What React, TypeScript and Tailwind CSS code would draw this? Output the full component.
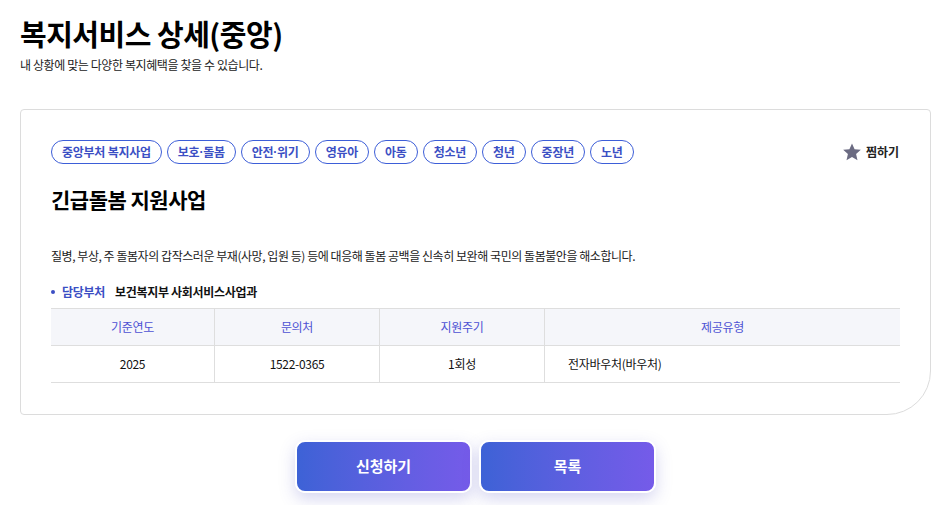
import React from "react";

const tags = ["중앙부처 복지사업", "보호|돌봄", "안전|위기", "영유아", "아동", "청소년", "청년", "중장년", "노년"];

function Tag({ t }: { t: string }) {
  const parts = t.split("|");
  return (
    <span className="h-[24px] px-[10px] flex items-center rounded-full border border-[#3d5ed8] text-[#3b4fc4] text-[12px] font-semibold tracking-[-0.25px]">
      {parts.length === 2 ? (
        <>
          {parts[0]}
          <span style={{ fontFamily: '"Liberation Sans", sans-serif' }}>·</span>
          {parts[1]}
        </>
      ) : (
        t
      )}
    </span>
  );
}

export default function App() {
  return (
    <div
      className="w-[947px] h-[505px] bg-white text-[#111] overflow-hidden"
      style={{ fontFamily: '"Noto Sans CJK KR", "Noto Sans", sans-serif' }}
    >
      <div className="px-5 pt-[14px]">
        <h1 className="text-[29px] font-bold leading-[38px] tracking-[-0.5px] text-black">복지서비스 상세(중앙)</h1>
        <p className="mt-[5px] text-[12px] leading-[16px] text-[#222] tracking-[-0.4px]">내 상황에 맞는 다양한 복지혜택을 찾을 수 있습니다.</p>
      </div>

      <div className="ml-5 mr-[16px] mt-[36px] h-[306px] border border-[#dcdcdc] rounded-[4px] rounded-br-[44px] px-[30px] pt-[30px]">
        <div className="flex items-start justify-between">
          <div className="flex gap-[5px]">
            {tags.map((t) => (
              <Tag key={t} t={t} />
            ))}
          </div>
          <div className="flex items-center gap-[4px] pt-[2px] mr-[1px]">
            <svg width="20" height="20" viewBox="0 0 24 24">
              <path
                d="M12 1.8l3.1 6.9 7.5.7-5.7 5 1.7 7.4L12 17.9l-6.6 3.9 1.7-7.4-5.7-5 7.5-.7z"
                fill="#6b6b82"
              />
            </svg>
            <span className="text-[12px] font-bold text-[#222]">찜하기</span>
          </div>
        </div>

        <h2 className="mt-[20px] text-[21px] font-bold leading-[30px] tracking-[-0.5px] text-black">긴급돌봄 지원사업</h2>

        <p className="mt-[34px] text-[12px] leading-[16px] text-[#222] tracking-[-0.45px]">
          질병, 부상, 주 돌봄자의 갑작스러운 부재(사망, 입원 등) 등에 대응해 돌봄 공백을 신속히 보완해 국민의 돌봄불안을 해소합니다.
        </p>

        <div className="mt-[19px] flex items-center text-[12px] tracking-[-0.3px]">
          <span className="w-[4px] h-[4px] rounded-full bg-[#3b4fc4] mr-[7px]" />
          <span className="text-[#3b4fc4] font-semibold w-[53px]">담당부처</span>
          <span className="font-semibold text-[#111]">보건복지부 사회서비스사업과</span>
        </div>

        <div className="mt-[7px] grid grid-cols-[164px_165px_165px_1fr] border-t border-b border-[#dedede] text-[12px] tracking-[-0.3px]">
          <div className="h-[37px] bg-[#f5f6fa] flex items-center justify-center text-[#4d52d4] border-b border-r border-[#dedede]">기준연도</div>
          <div className="h-[37px] bg-[#f5f6fa] flex items-center justify-center text-[#4d52d4] border-b border-r border-[#dedede]">문의처</div>
          <div className="h-[37px] bg-[#f5f6fa] flex items-center justify-center text-[#4d52d4] border-b border-r border-[#dedede]">지원주기</div>
          <div className="h-[37px] bg-[#f5f6fa] flex items-center justify-center text-[#4d52d4] border-b border-[#dedede]">제공유형</div>
          <div className="h-[36px] flex items-center justify-center text-[#111] border-r border-[#dedede]">2025</div>
          <div className="h-[36px] flex items-center justify-center text-[#111] border-r border-[#dedede]">1522-0365</div>
          <div className="h-[36px] flex items-center justify-center text-[#111] border-r border-[#dedede]">1회성</div>
          <div className="h-[36px] flex items-center pl-[23px] text-[#111]">전자바우처(바우처)</div>
        </div>
      </div>

      <div className="mt-[25px] flex justify-center gap-[7px] pl-[4px]">
        {["신청하기", "목록"].map((b) => (
          <button
            key={b}
            className="w-[177px] h-[53px] rounded-[10px] border-2 border-white bg-gradient-to-r from-[#3d62d6] to-[#755be9] text-white text-[15px] font-bold shadow-[0_6px_16px_rgba(90,90,200,0.25)]"
          >
            {b}
          </button>
        ))}
      </div>
    </div>
  );
}
